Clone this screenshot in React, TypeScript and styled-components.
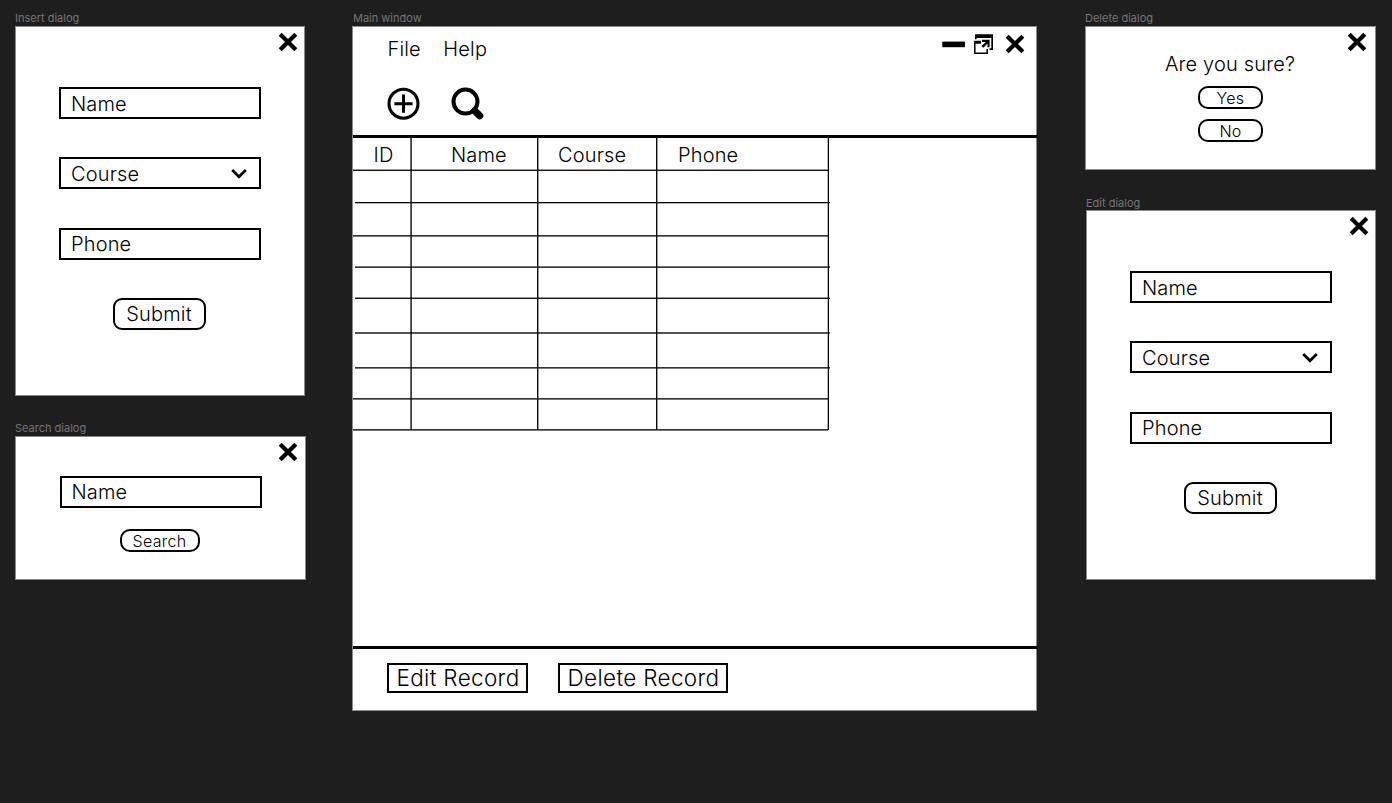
import React from "react";
import styled, { createGlobalStyle } from "styled-components";

const GlobalStyle = createGlobalStyle`
  * { box-sizing: border-box; }
  body { margin: 0; background: #1e1e1e; }
`;

const Canvas = styled.main`
  display: flex;
  align-items: flex-start;
  width: 1392px;
  height: 803px;
  padding: 10px 0 0 15px;
  background: #1e1e1e;
  color: #000;
  font-family: Inter, "Liberation Sans", sans-serif;
  font-size: 20px;
  font-weight: 360;
  letter-spacing: 0.16px;
  overflow: hidden;
`;

const Column = styled.div<{ $width: number; $before?: number }>`
  flex: none;
  width: ${(p) => p.$width}px;
  margin-left: ${(p) => p.$before ?? 0}px;
`;

const Artboard = styled.section<{ $top?: number; $indent?: number }>`
  margin: ${(p) => p.$top ?? 0}px 0 0 ${(p) => p.$indent ?? 0}px;
`;

const Caption = styled.h2<{ $low?: boolean; $indent?: number }>`
  height: 16px;
  margin: 0;
  padding-left: ${(p) => p.$indent ?? 0}px;
  color: #757575;
  font-size: 11px;
  font-weight: 400;
  line-height: ${(p) => (p.$low ? 18 : 16)}px;
  letter-spacing: 0;
  white-space: nowrap;
`;

const Panel = styled.div<{ $width: number; $height: number }>`
  display: flex;
  flex-direction: column;
  width: ${(p) => p.$width}px;
  height: ${(p) => p.$height}px;
  background: #fff;
  border: 1px solid #8a8a8a;
`;

const DialogTop = styled.div<{ $height: number; $right: number }>`
  display: flex;
  flex: none;
  justify-content: flex-end;
  height: ${(p) => p.$height}px;
  padding: 5px ${(p) => p.$right}px 0 0;
`;

const Stack = styled.div<{ $gap: number }>`
  display: flex;
  flex-direction: column;
  align-items: center;
  gap: ${(p) => p.$gap}px;
`;

const Field = styled.div<{ $low?: boolean }>`
  display: flex;
  align-items: center;
  justify-content: space-between;
  width: 202px;
  height: 32px;
  padding: ${(p) => (p.$low ? 1 : 0)}px 12px 0 10px;
  border: 2px solid #000;
  line-height: 28px;
`;

const PillButton = styled.button<{ $width: number; $small?: boolean; $nudge?: number }>`
  display: flex;
  align-items: center;
  justify-content: center;
  width: ${(p) => p.$width}px;
  height: ${(p) => (p.$small ? 23 : 32)}px;
  margin-right: ${(p) => p.$nudge ?? 0}px;
  padding: 0;
  background: #fff;
  border: 2px solid #000;
  border-radius: ${(p) => (p.$small ? 10 : 9)}px;
  color: #000;
  font: inherit;
  font-size: ${(p) => (p.$small ? 16 : 20)}px;
  letter-spacing: ${(p) => (p.$small ? 0.3 : 0.2)}px;
`;

const Question = styled.p`
  height: 24px;
  margin: 0 1px 10px 0;
  line-height: 25px;
`;

const MenuBar = styled.div`
  display: flex;
  justify-content: space-between;
  height: 44px;
  padding: 7px 11px 0 34.5px;
`;

const MenuItems = styled.nav`
  display: flex;
  gap: 22.5px;
  line-height: 30px;
`;

const WindowControls = styled.div`
  display: flex;
  align-items: flex-start;
`;

const Toolbar = styled.div`
  display: flex;
  gap: 31px;
  height: 67px;
  margin-right: -1px;
  padding: 16px 0 0 34px;
  border-bottom: 3px solid #000;
`;

const Records = styled.div`
  position: relative;
  width: 477px;
  height: 293px;
`;

const Row = styled.div<{ $height: number; $inset?: boolean; $line: [number, number] }>`
  display: flex;
  width: 475px;
  height: ${(p) => p.$height}px;
  margin-left: ${(p) => (p.$inset ? 2 : 0)}px;
  background: linear-gradient(rgba(0, 0, 0, ${(p) => p.$line[0]}) 50%, rgba(0, 0, 0, ${(p) => p.$line[1]}) 50%)
    bottom / 100% 2px no-repeat;
`;

const HeadCell = styled.div<{ $width: number; $pad: number }>`
  width: ${(p) => p.$width}px;
  padding-left: ${(p) => p.$pad}px;
  line-height: 35px;
`;

const ColumnRules = styled.div`
  position: absolute;
  inset: 0;
  display: flex;
  height: 292px;
`;

const Rule = styled.div<{ $width: number; $line: [number, number] }>`
  flex: none;
  width: ${(p) => p.$width}px;
  background: linear-gradient(90deg, rgba(0, 0, 0, ${(p) => p.$line[0]}) 50%, rgba(0, 0, 0, ${(p) => p.$line[1]}) 50%)
    right / 2px 100% no-repeat;
`;

const Footer = styled.div`
  display: flex;
  gap: 30px;
  height: 64px;
  margin: auto -1px 0 0;
  padding: 14px 0 0 34px;
  border-top: 3px solid #000;
`;

const RecordButton = styled.button<{ $width: number }>`
  width: ${(p) => p.$width}px;
  height: 30px;
  padding: 0 0 0 1px;
  background: #fff;
  border: 2px solid #000;
  color: #000;
  font: inherit;
  font-size: 22.5px;
  letter-spacing: 0.33px;
  line-height: 26px;
  white-space: nowrap;
`;

const CloseIcon = () => (
  <svg width="20" height="20" viewBox="0 0 20 20">
    <path d="M2.2 2.2L17.8 17.8M17.8 2.2L2.2 17.8" stroke="#000" strokeWidth="4.2" />
  </svg>
);

const ChevronIcon = () => (
  <svg width="16" height="10" viewBox="0 0 16 10">
    <path d="M1.2 1L8 7.8L14.8 1" fill="none" stroke="#000" strokeWidth="2.7" />
  </svg>
);

const MinimizeIcon = () => (
  <svg width="24" height="20" viewBox="0 0 24 20">
    <rect x="0.3" y="7.6" width="22.6" height="5.6" fill="#000" />
  </svg>
);

const RestoreIcon = () => (
  <svg width="20" height="20" viewBox="0 0 20 20">
    <path d="M1 5.2V0.3H19V16H15.5V14.3H17.3V4H2.6V5.2Z" fill="#000" />
    <path d="M7 7.6H0.8V19.2H13.2V15" fill="none" stroke="#000" strokeWidth="1.5" />
    <path d="M0 7H7V9.8H0Z" fill="#000" />
    <path d="M8 5.8H15.6V13.2H13.5V9.6L9.3 13.7L7.5 12L11.7 7.9H8Z" fill="#000" />
  </svg>
);

const AddIcon = () => (
  <svg width="33" height="33" viewBox="0 0 33 33">
    <circle cx="16.5" cy="16.7" r="14.5" fill="none" stroke="#000" strokeWidth="3.1" />
    <path d="M16.5 7.6V25.8M7.4 16.7H25.6" stroke="#000" strokeWidth="2.9" />
  </svg>
);

const SearchIcon = () => (
  <svg width="34" height="34" viewBox="0 0 34 34">
    <circle cx="14.5" cy="14.6" r="12" fill="none" stroke="#000" strokeWidth="4" />
    <path d="M23.7 23.8L28.7 28.8" stroke="#000" strokeWidth="7.2" strokeLinecap="round" />
  </svg>
);

const Gap = styled.div<{ $width?: number; $height?: number }>`
  flex: none;
  width: ${(p) => p.$width ?? 0}px;
  height: ${(p) => p.$height ?? 0}px;
`;

const RecordForm = () => (
  <Stack $gap={0}>
    <Field $low>Name</Field>
    <Gap $height={38} />
    <Field $low>
      Course
      <ChevronIcon />
    </Field>
    <Gap $height={39} />
    <Field>Phone</Field>
    <Gap $height={38} />
    <PillButton $width={93} $nudge={2}>
      Submit
    </PillButton>
  </Stack>
);

const rows: { height: number; inset?: boolean; line: [number, number] }[] = [
  { height: 33, inset: true, line: [1, 0.3] },
  { height: 33, line: [0.8, 0.53] },
  { height: 31, inset: true, line: [0.53, 0.8] },
  { height: 31, inset: true, line: [0.4, 0.93] },
  { height: 35, inset: true, line: [0.67, 0.67] },
  { height: 35, inset: true, line: [0.8, 0.53] },
  { height: 31, line: [0.8, 0.53] },
  { height: 31, line: [0.8, 0.53] },
];

export default function App() {
  return (
    <Canvas>
      <GlobalStyle />
      <Column $width={291}>
        <Artboard>
          <Caption>Insert dialog</Caption>
          <Panel $width={290} $height={370}>
            <DialogTop $height={60} $right={6}>
              <CloseIcon />
            </DialogTop>
            <RecordForm />
          </Panel>
        </Artboard>
        <Artboard $top={24}>
          <Caption>Search dialog</Caption>
          <Panel $width={291} $height={144}>
            <DialogTop $height={39} $right={7.5}>
              <CloseIcon />
            </DialogTop>
            <Stack $gap={21}>
              <Field>Name</Field>
              <PillButton $width={80} $nudge={2} $small>
                Search
              </PillButton>
            </Stack>
          </Panel>
        </Artboard>
      </Column>

      <Column $width={686} $before={46}>
        <Artboard>
          <Caption $indent={1}>Main window</Caption>
          <Panel $width={685} $height={685}>
            <MenuBar>
              <MenuItems>
                <span>File</span>
                <span>Help</span>
              </MenuItems>
              <WindowControls>
                <MinimizeIcon />
                <Gap $width={8} />
                <RestoreIcon />
                <Gap $width={11} />
                <CloseIcon />
              </WindowControls>
            </MenuBar>
            <Toolbar>
              <AddIcon />
              <SearchIcon />
            </Toolbar>
            <Records>
              <Row $height={33} $line={[0.4, 0.93]}>
                <HeadCell $width={58} $pad={20.5}>ID</HeadCell>
                <HeadCell $width={127} $pad={40}>Name</HeadCell>
                <HeadCell $width={119} $pad={20}>Course</HeadCell>
                <HeadCell $width={171} $pad={21}>Phone</HeadCell>
              </Row>
              {rows.map((row, i) => (
                <Row key={i} $height={row.height} $inset={row.inset} $line={row.line} />
              ))}
              <ColumnRules>
                <Rule $width={59} $line={[0.6, 0.75]} />
                <Rule $width={127} $line={[0.95, 0.4]} />
                <Rule $width={119} $line={[0.95, 0.4]} />
                <Rule $width={171} $line={[0.27, 1]} />
              </ColumnRules>
            </Records>
            <Footer>
              <RecordButton $width={141}>Edit Record</RecordButton>
              <RecordButton $width={170}>Delete Record</RecordButton>
            </Footer>
          </Panel>
        </Artboard>
      </Column>

      <Column $width={291} $before={47}>
        <Artboard>
          <Caption>Delete dialog</Caption>
          <Panel $width={291} $height={144}>
            <DialogTop $height={25} $right={8}>
              <CloseIcon />
            </DialogTop>
            <Stack $gap={10}>
              <Stack $gap={0}>
                <Question>Are you sure?</Question>
                <PillButton $width={65} $small>
                  Yes
                </PillButton>
              </Stack>
              <PillButton $width={65} $small>
                No
              </PillButton>
            </Stack>
          </Panel>
        </Artboard>
        <Artboard $top={24} $indent={1}>
          <Caption $low>Edit dialog</Caption>
          <Panel $width={290} $height={370}>
            <DialogTop $height={60} $right={6}>
              <CloseIcon />
            </DialogTop>
            <RecordForm />
          </Panel>
        </Artboard>
      </Column>
    </Canvas>
  );
}
